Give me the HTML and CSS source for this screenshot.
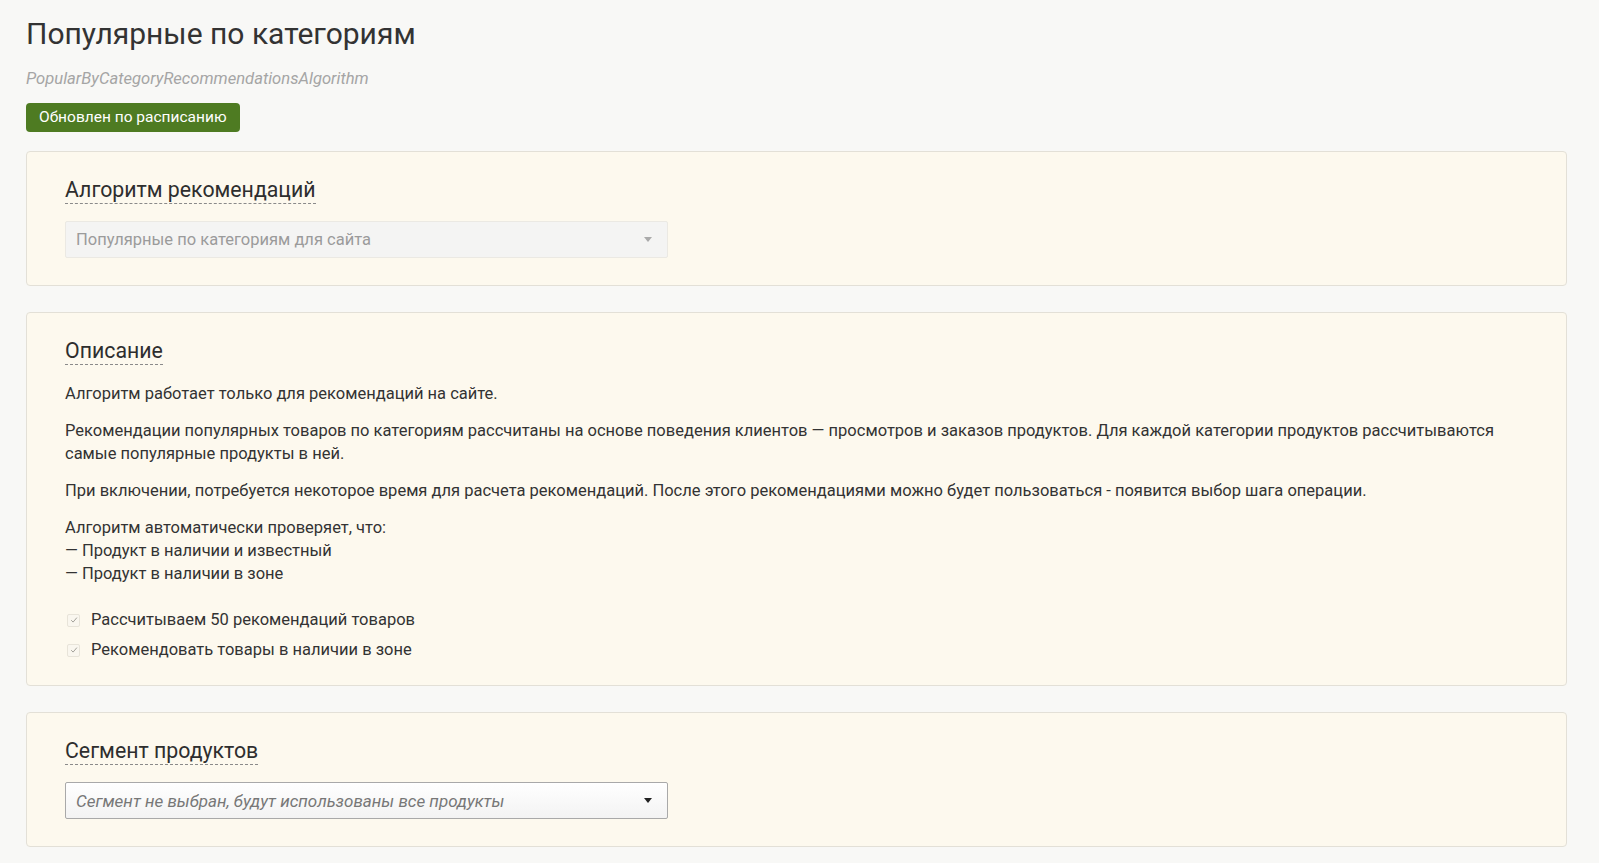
FILE: index.html
```html
<!DOCTYPE html>
<html lang="ru">
<head>
<meta charset="utf-8">
<title>Популярные по категориям</title>
<link rel="stylesheet" href="styles.css">
</head>
<body>
<div class="page">
  <h1 class="title">Популярные по категориям</h1>
  <div class="system-name">PopularByCategoryRecommendationsAlgorithm</div>
  <div class="status-row"><span class="status">Обновлен по расписанию</span></div>

  <section class="card">
    <h2 class="card-title"><span>Алгоритм рекомендаций</span></h2>
    <div class="select select-disabled">
      <span class="select-text">Популярные по категориям для сайта</span>
      <span class="arrow arrow-light"></span>
    </div>
  </section>

  <section class="card">
    <h2 class="card-title"><span>Описание</span></h2>
    <p class="para">Алгоритм работает только для рекомендаций на сайте.</p>
    <p class="para">Рекомендации популярных товаров по категориям рассчитаны на основе поведения клиентов — просмотров и заказов продуктов. Для каждой категории продуктов рассчитываются самые популярные продукты в ней.</p>
    <p class="para">При включении, потребуется некоторое время для расчета рекомендаций. После этого рекомендациями можно будет пользоваться - появится выбор шага операции.</p>
    <p class="para">Алгоритм автоматически проверяет, что:<br>— Продукт в наличии и известный<br>— Продукт в наличии в зоне</p>
    <div class="checks">
      <label class="check"><span class="box"><svg viewBox="0 0 10 10" width="10" height="10"><path d="M2.2 5.2 L4.1 7.1 L7.9 2.6" fill="none" stroke="#a3a19a" stroke-width="1"/></svg></span><span>Рассчитываем 50 рекомендаций товаров</span></label>
      <label class="check"><span class="box"><svg viewBox="0 0 10 10" width="10" height="10"><path d="M2.2 5.2 L4.1 7.1 L7.9 2.6" fill="none" stroke="#a3a19a" stroke-width="1"/></svg></span><span>Рекомендовать товары в наличии в зоне</span></label>
    </div>
  </section>

  <section class="card">
    <h2 class="card-title"><span>Сегмент продуктов</span></h2>
    <div class="select select-active">
      <span class="select-text placeholder">Сегмент не выбран, будут использованы все продукты</span>
      <span class="arrow arrow-dark"></span>
    </div>
  </section>
</div>
</body>
</html>
```

FILE: styles.css
```css
html, body {
  margin: 0;
  padding: 0;
  background: #f8f8f6;
}
body {
  font-family: Roboto, "Noto Sans", sans-serif;
  color: #333;
  font-size: 16.5px;
}
.page {
  padding: 14px 32px 20px 26px;
}
.title {
  margin: 0;
  font-size: 30px;
  font-weight: 400;
  line-height: 40px;
  color: #333;
}
.system-name {
  margin-top: 15px;
  font-style: italic;
  font-size: 16.6px;
  line-height: 20px;
  color: #a5a5a5;
}
.status-row {
  margin-top: 14px;
  display: flex;
}
.status {
  display: inline-block;
  background: #4e7b22;
  color: #fff;
  font-size: 15.5px;
  line-height: 29px;
  height: 29px;
  padding: 0 13px;
  border-radius: 4px;
}
.card {
  margin-top: 19px;
  background: #fdf9ee;
  border: 1px solid #e3e0d7;
  border-radius: 4px;
  padding: 24px 38px 27px 38px;
}
.card + .card {
  margin-top: 26px;
}
.card-title {
  margin: 0;
  font-size: 21.3px;
  font-weight: 400;
  line-height: 28px;
  color: #2e2e2e;
}
.card-title span {
  display: inline-block;
  line-height: 26px;
  border-bottom: 1px dashed #8a8a8a;
}
.select {
  margin-top: 17px;
  width: 603px;
  height: 37px;
  box-sizing: border-box;
  display: flex;
  align-items: center;
  justify-content: space-between;
  padding: 0 15px 0 10px;
  border-radius: 2px;
  font-size: 16.5px;
}
.select-disabled {
  background: #f4f4f3;
  border: 1px solid #ebe9e3;
  color: #9b9b9b;
}
.select-active {
  background: linear-gradient(#ffffff, #f3f3f3);
  border: 1px solid #a9a9a9;
}
.placeholder {
  font-style: italic;
  font-size: 17px;
  color: #777;
}
.arrow {
  width: 0;
  height: 0;
  border-left: 4px solid transparent;
  border-right: 4px solid transparent;
  border-top: 5px solid #aaa;
}
.arrow-dark {
  border-top-color: #222;
}
.para {
  margin: 14px 0 0 0;
  line-height: 23px;
}
.card-title + .para {
  margin-top: 17px;
}
.checks {
  margin-top: 23px;
  display: flex;
  flex-direction: column;
  gap: 6px;
}
.check {
  display: flex;
  align-items: center;
  line-height: 24px;
}
.check:last-child {
  margin-bottom: -4px;
}
.box {
  width: 11px;
  height: 11px;
  margin: 0 11px 0 2px;
  border: 1px solid #e8e4d9;
  border-radius: 2px;
  background: #faf7ef;
  display: flex;
  align-items: center;
  justify-content: center;
}
```
